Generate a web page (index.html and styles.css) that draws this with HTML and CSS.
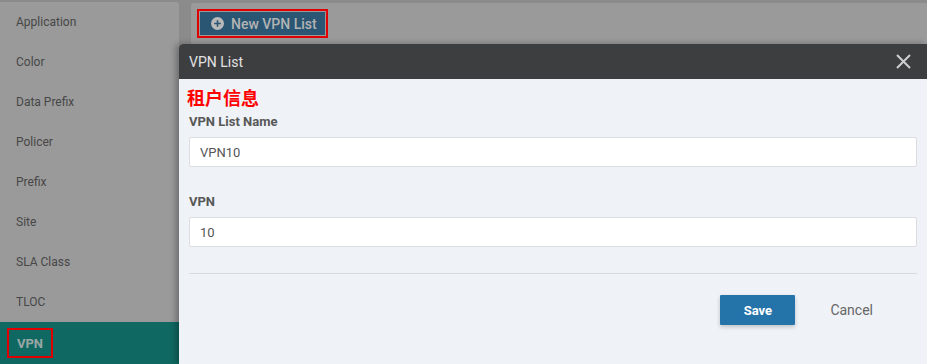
FILE: index.html
```html
<!DOCTYPE html>
<html>
<head>
<meta charset="utf-8">
<link rel="stylesheet" href="styles.css">
</head>
<body>
<div class="page">
  <aside class="sidebar">
    <div class="item">Application</div>
    <div class="item">Color</div>
    <div class="item">Data Prefix</div>
    <div class="item">Policer</div>
    <div class="item">Prefix</div>
    <div class="item">Site</div>
    <div class="item">SLA Class</div>
    <div class="item">TLOC</div>
    <div class="item active"><span class="mark">VPN</span></div>
  </aside>
  <main class="content">
    <div class="toolbar">
      <span class="mark-btn">
        <button class="new-btn">
          <svg class="plus" width="13" height="13" viewBox="0 0 13 13"><circle cx="6.5" cy="6.5" r="6.5" fill="#b9b9b9"/><path d="M6.5 3.2v6.6M3.2 6.5h6.6" stroke="#2b5573" stroke-width="1.6"/></svg>
          New VPN List
        </button>
      </span>
    </div>
  </main>
  <div class="modal">
    <div class="modal-header">
      <span class="modal-title">VPN List</span>
      <svg class="close" width="15" height="15" viewBox="0 0 15 15"><path d="M1 1L14 14M14 1L1 14" stroke="#cfcfcf" stroke-width="2"/></svg>
    </div>
    <div class="modal-body">
      <div class="heading">租户信息</div>
      <label class="label first">VPN List Name</label>
      <div class="input">VPN10</div>
      <label class="label">VPN</label>
      <div class="input">10</div>
      <div class="divider"></div>
      <div class="footer">
        <button class="save">Save</button>
        <button class="cancel">Cancel</button>
      </div>
    </div>
  </div>
</div>
</body>
</html>
```

FILE: styles.css
```css
* { box-sizing: border-box; }
html, body { margin: 0; padding: 0; }
body {
  width: 927px;
  height: 364px;
  overflow: hidden;
  font-family: Roboto, "Liberation Sans", "Noto Sans CJK SC", sans-serif;
  background: #8b8b8b;
}
.page {
  position: relative;
  width: 927px;
  height: 364px;
  display: flex;
  gap: 12px;
  overflow: hidden;
}
.sidebar {
  width: 179px;
  margin-top: 2px;
  background: #9a9a9a;
  border-radius: 0 3px 0 0;
  display: flex;
  flex-direction: column;
}
.item {
  height: 40px;
  display: flex;
  align-items: center;
  padding-left: 16px;
  font-size: 12px;
  color: #474747;
  flex-shrink: 0;
}
.item.active {
  background: #0f6962;
  height: 42px;
  padding-left: 7px;
}
.mark {
  border: 2px solid #e00000;
  width: 46px;
  height: 30px;
  display: flex;
  align-items: center;
  padding-left: 8px;
  font-weight: 700;
  color: #9aa6a4;
  font-size: 13px;
}
.content {
  flex: 1;
  margin-top: 3px;
  background: #9a9a9a;
  border-radius: 3px 0 0 0;
}
.toolbar {
  padding: 6px 0 0 6px;
}
.mark-btn {
  display: inline-block;
  border: 2px solid #e00000;
  padding: 1px;
}
.new-btn {
  display: flex;
  align-items: center;
  gap: 7px;
  height: 23px;
  width: 125px;
  padding: 0 0 0 11px;
  border: none;
  background: #2a5674;
  color: #b3b3b3;
  font-family: Roboto, "Liberation Sans", sans-serif;
  font-size: 14px;
  font-weight: 500;
}
.modal {
  position: absolute;
  left: 179px;
  top: 44px;
  right: 0;
  bottom: 0;
  background: #eff2f7;
  box-shadow: -3px 0 6px rgba(0,0,0,0.3);
  border-radius: 4px 0 0 0;
}
.modal-header {
  height: 35px;
  background: #3d3e40;
  border-radius: 4px 0 0 0;
  display: flex;
  align-items: center;
  justify-content: space-between;
  padding: 0 16px 0 10px;
}
.modal-title {
  color: #e2e2e2;
  font-size: 14px;
}
.modal-body {
  padding: 7px 10px 0 10px;
}
.heading {
  color: #ff0000;
  font-family: "Noto Sans CJK SC", sans-serif;
  font-weight: 700;
  font-size: 18px;
  line-height: 22px;
  margin-left: -2px;
}
.label {
  display: block;
  font-size: 13px;
  font-weight: 700;
  color: #575757;
  line-height: 16px;
  margin-top: 27px;
}
.label.first { margin-top: 6px; }
.input {
  margin-top: 7px;
  height: 30px;
  background: #fff;
  border: 1px solid #dcdde0;
  border-radius: 2px;
  padding-left: 10px;
  display: flex;
  align-items: center;
  font-size: 13px;
  color: #555;
}
.divider {
  margin-top: 26px;
  height: 1px;
  background: #d8dade;
}
.footer {
  margin-top: 21px;
  display: flex;
  justify-content: flex-end;
  align-items: center;
  gap: 35px;
  padding-right: 44px;
}
.save {
  width: 75px;
  height: 30px;
  border: none;
  border-radius: 1px;
  background: #2473a9;
  color: #fff;
  font-family: Roboto, "Liberation Sans", sans-serif;
  font-weight: 700;
  font-size: 13px;
  box-shadow: 0 2px 4px rgba(0,0,0,0.2);
}
.cancel {
  border: none;
  background: none;
  padding: 0;
  color: #666;
  font-family: Roboto, "Liberation Sans", sans-serif;
  font-size: 14px;
}
```
